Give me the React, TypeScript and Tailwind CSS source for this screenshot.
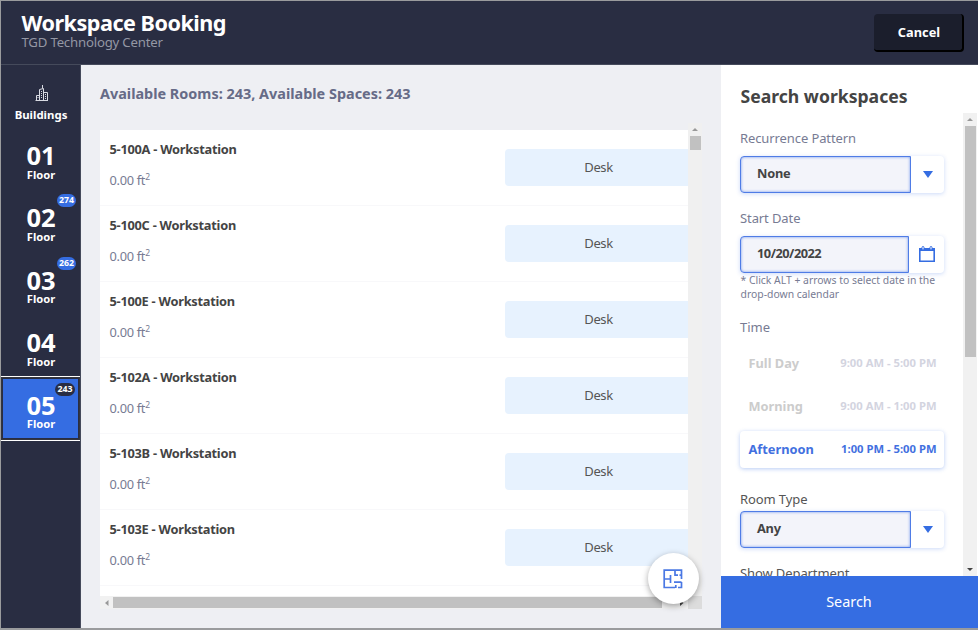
import React from "react";

const rooms = ["5-100A", "5-100C", "5-100E", "5-102A", "5-103B", "5-103E"];

function BuildingsIcon() {
  return (
    <svg className="ml-px" width="14" height="18" viewBox="0 0 14 18" fill="none" stroke="#d9dbe3" strokeWidth="1">
      <path d="M1.5 16.5V11.5H4.5V16.5M4.5 16.5V5.5L8.5 4.5V16.5M8.5 8.5H12.5V16.5M.5 16.5H13M7.5 4.5V1" />
      <path d="M6.5 7V15M10.5 10V15M3 13V15" strokeDasharray="1 1" />
    </svg>
  );
}

function Floor({ n, count, active }: { n: string; count?: number; active?: boolean }) {
  return (
    <div
      className={
        active
          ? "relative -mt-px h-[65px] border-y border-white bg-[#33353f] p-px"
          : "relative h-[62.4px] pt-px"
      }
    >
      <div className={active ? "flex h-full flex-col items-center border border-[#292d42] bg-[#356de2] pl-px" : "flex h-full flex-col items-center pl-px"}>
        <div className={active ? "mt-[14px] h-6 text-[25.5px] leading-6 font-bold" : "mt-[15px] h-[24.5px] text-[25.5px] leading-6 font-bold"}>{n}</div>
        <div className="text-[11.2px] leading-[14px] font-bold">Floor</div>
      </div>
      {count && (
        <span
          className={
            active
              ? "absolute top-[6px] left-[54px] h-[13px] w-[20px] rounded-full bg-[#292d42] text-center text-[8.8px] leading-[13px] font-bold"
              : "absolute top-[5px] left-[56px] h-[13px] w-[19px] rounded-full bg-[#356de2] text-center text-[8.8px] leading-[13px] font-bold"
          }
        >
          {count}
        </span>
      )}
    </div>
  );
}

function Triangle({ dir, color }: { dir: "up" | "down" | "left" | "right"; color: string }) {
  const paths = { up: "M0 5L3 2L6 5Z", down: "M0 2L3 5L6 2Z", left: "M4.5 0L1 3L4.5 6Z", right: "M1 0L4.5 3L1 6Z" };
  return (
    <svg width="6" height="6" viewBox="0 0 6 6" fill={color}>
      <path d={paths[dir]} />
    </svg>
  );
}

function Select({ value }: { value: string }) {
  return (
    <div className="flex h-[37px] w-[204px] rounded-[4px] bg-white shadow-[0_1px_4px_rgba(53,109,226,0.25)]">
      <div className="flex w-[171px] items-center rounded-l-[4px] border border-[#4f7ce6] bg-[#f3f4fa] pl-4 text-[12.8px] font-bold tracking-[-0.25px] text-[#444] shadow-[inset_0_0_3px_#6f94ec]">
        <span className="-mt-px">{value}</span>
      </div>
      <div className="flex flex-1 items-center justify-center">
        <svg width="10" height="7" viewBox="0 0 10 7" fill="#356de2"><path d="M0 0H10L5 7Z" /></svg>
      </div>
    </div>
  );
}

function Slot({ name, time, active }: { name: string; time: string; active?: boolean }) {
  return (
    <div
      className={
        active
          ? "flex h-[37px] w-[204px] items-center justify-between rounded-[4px] pr-[7.5px] pl-[8.5px] font-bold text-[#4270e0] shadow-[0_1px_4px_rgba(53,109,226,0.35)]"
          : "flex h-[37px] w-[204px] items-center justify-between pr-[7.5px] pl-[8.5px] font-bold text-[#d3d4df]"
      }
    >
      <span className={active ? "text-[12.8px]" : "text-[12.8px] text-[#cccccc]"}>{name}</span>
      <span className="text-[11.25px]">{time}</span>
    </div>
  );
}

export default function App() {
  return (
    <div className="h-[630px] w-[978px] overflow-hidden bg-[#9a9b9d] pt-px pl-px font-['Noto_Sans',sans-serif] whitespace-nowrap">
      <header className="flex h-16 justify-between border-b border-[#454a5b] bg-[#292d42] pl-[20.5px] text-white">
        <div className="pt-[9px]">
          <h1 className="h-[25px] text-[21.6px] leading-[25px] font-bold tracking-[-0.5px]">Workspace Booking</h1>
          <p className="-mt-[2px] text-[13.2px] leading-[18px] tracking-[-0.2px] text-[#9497a4]">TGD Technology Center</p>
        </div>
        <button className="mt-[13px] mr-[14px] h-[38px] w-[90px] rounded-[4px] border-r-2 border-b-2 border-black bg-[#1b1e2c] pt-[2px] pl-[2px] text-[12.8px] font-bold">
          Cancel
        </button>
      </header>
      <div className="flex h-[563px]">
        <aside className="w-20 border-r border-[#454a5b] bg-[#292d42] text-white">
          <div className="flex h-[62px] flex-col items-center pt-[19px] pl-px">
            <BuildingsIcon />
            <span className="mt-[5px] text-[11.4px] leading-4 font-bold">Buildings</span>
          </div>
          <Floor n="01" />
          <Floor n="02" count={274} />
          <Floor n="03" count={262} />
          <Floor n="04" />
          <Floor n="05" count={243} active />
        </aside>

        <main className="relative w-[640px] bg-[#eeeff3] pl-[19px]">
          <h2 className="pt-[19px] text-[14.43px] leading-5 font-bold text-[#666b87]">Available Rooms: 243, Available Spaces: 243</h2>
          <div className="mt-[19px] flex h-[473px]">
            <div className="mt-[7px] h-[466px] w-[588px] overflow-hidden bg-white">
              {rooms.map((r) => (
                <div key={r} className="flex h-[76px] justify-between border-b border-[#f8f8fa] pl-[9.5px]">
                  <div>
                    <div className="mt-[10px] text-[12.8px] leading-[18px] font-bold tracking-[-0.25px] text-[#444]">{r} - Workstation</div>
                    <div className="mt-[13px] text-[12.8px] leading-[18px] tracking-[-0.3px] text-[#777b93]">
                      0.00 ft<sup className="-top-[5px] text-[8.5px] leading-none">2</sup>
                    </div>
                  </div>
                  <div className="mt-[19.4px] -mr-1 h-[36.6px] w-[187px] rounded-[4px] bg-[#e7f2fe] text-center text-[13px] leading-[36px] tracking-[-0.4px] text-[#555]">Desk</div>
                </div>
              ))}
            </div>
            <div className="flex w-[14px] flex-col items-center bg-[#f0f0f0] pt-[3px]">
              <Triangle dir="up" color="#999" />
              <div className="mt-[4px] h-[14px] w-[11px] bg-[#c1c1c1]" />
            </div>
          </div>
          <div className="flex h-[13px] w-[602px] bg-[#f1f1f1]">
            <div className="flex w-[13px] items-center justify-center"><Triangle dir="left" color="#999" /></div>
            <div className="mt-px h-[11px] w-[549px] bg-[#c1c1c1]" />
            <div className="flex flex-1 items-center pl-[17px]"><Triangle dir="right" color="#444" /></div>
            <div className="w-[14px] bg-[#dcdcdc]" />
          </div>
          <button className="absolute top-[488px] left-[567px] flex size-[51px] items-center justify-center rounded-full bg-white shadow-[0_2px_6px_rgba(0,0,0,0.35)]">
            <svg className="-ml-px" width="20" height="20" viewBox="0 0 20 20" fill="none" stroke="#4a78e4" strokeWidth="1.7">
              <path d="M12 18.5H1.2V1.2H18.5V10M18.5 13V18.5H15M1 10H7.5M7.5 6V14M12 1V6.2H15M18.5 6.2H16.5M11 13.2H18.5M12.8 16V19" />
            </svg>
          </button>
        </main>

        <section className="flex w-[257px] flex-col bg-white">
          <h2 className="mt-[19px] ml-[19.5px] h-[24px] text-[17.6px] leading-[24px] font-bold text-[#444]">Search workspaces</h2>
          <div className="mt-[5px] flex h-[463px] overflow-hidden">
            <div className="w-[242px] pl-[19px] text-[13px] text-[#777b93]">
              <div className="mt-[16px] mb-[9px] h-[18px] leading-[18px] tracking-[-0.1px]">Recurrence Pattern</div>
              <Select value="None" />
              <div className="mt-[16px] mb-[9px] h-[18px] leading-[18px] tracking-[-0.1px]">Start Date</div>
              <div className="flex h-[37px] w-[204px] rounded-[4px] bg-white shadow-[0_1px_4px_rgba(53,109,226,0.25)]">
                <div className="flex w-[169px] items-center rounded-l-[4px] border border-[#4f7ce6] bg-[#f3f4fa] pl-4 text-[12.8px] font-bold tracking-[-0.5px] text-[#444] shadow-[inset_0_0_3px_#6f94ec]">
                  <span className="-mt-px">10/20/2022</span>
                </div>
                <div className="flex flex-1 items-center justify-center">
                  <svg className="-mt-[2px]" width="18" height="18" viewBox="0 0 18 18" fill="none" stroke="#356de2">
                    <path d="M1.8 4.5H16.2V16.2H1.8Z" strokeWidth="1.6" />
                    <path d="M1 4.5H17" strokeWidth="3" />
                    <rect x="4" y="1.5" width="2" height="3.5" rx="1" fill="#fff" />
                    <rect x="12" y="1.5" width="2" height="3.5" rx="1" fill="#fff" />
                  </svg>
                </div>
              </div>
              <div className="h-[28px] pl-[0.5px] text-[10.4px] leading-[14px]">* Click ALT + arrows to select date in the<br />drop-down calendar</div>
              <div className="mt-[17px] mb-[9px] h-[18px] leading-[18px]">Time</div>
              <div className="flex flex-col gap-[6px]">
                <Slot name="Full Day" time="9:00 AM - 5:00 PM" />
                <Slot name="Morning" time="9:00 AM - 1:00 PM" />
                <Slot name="Afternoon" time="1:00 PM - 5:00 PM" active />
              </div>
              <div className="mt-[22px] mb-[3px] h-[18px] leading-[18px] tracking-[-0.1px] text-[#555]">Room Type</div>
              <Select value="Any" />
              <div className="mt-[16px] leading-[18px] tracking-[-0.1px] text-[#555]">Show Department</div>
            </div>
            <div className="flex w-[14px] flex-col items-center bg-[#f1f1f1] pt-[3px] pb-[4px]">
              <Triangle dir="up" color="#999" />
              <div className="mt-[4px] mb-auto h-[231px] w-[11px] bg-[#c1c1c1]" />
              <Triangle dir="down" color="#444" />
            </div>
          </div>
          <button className="h-[52px] bg-[#356de2] pr-[1px] text-[14.4px] text-white">Search</button>
        </section>
      </div>
    </div>
  );
}
